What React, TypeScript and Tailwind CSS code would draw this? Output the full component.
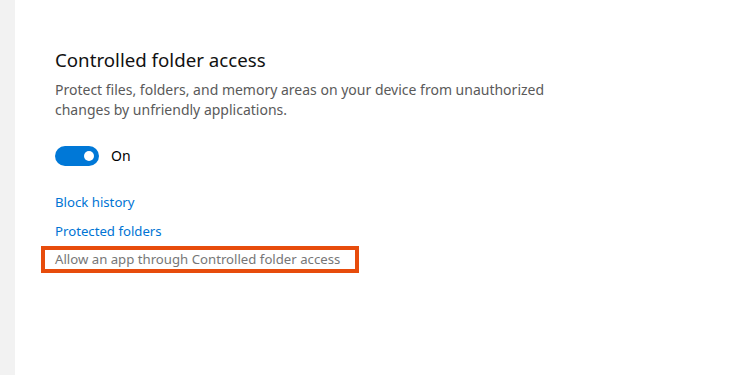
export default function App() {
  return (
    <div
      className="flex h-[375px] w-[750px] bg-white overflow-hidden"
      style={{ fontFamily: '"Noto Sans", "Open Sans", sans-serif' }}
    >
      <div className="w-[15px] shrink-0 bg-[#f2f2f2]" />
      <div className="flex flex-col pl-[40px] pt-[46px]">
        <h1 className="text-[18.7px] leading-[28px] text-[#111]">Controlled folder access</h1>
        <p className="mt-[6px] w-[500px] text-[14px] leading-[20px] text-[#5a5a5a]">
          Protect files, folders, and memory areas on your device from unauthorized changes by
          unfriendly applications.
        </p>

        <div className="mt-[25px] flex items-center gap-[12px]">
          <div className="flex h-[20px] w-[44px] items-center justify-end rounded-full bg-[#0078d7] pr-[5px]">
            <span className="h-[10px] w-[10px] rounded-full bg-white" />
          </div>
          <span className="text-[14px] text-black">On</span>
        </div>

        <div className="mt-[26px] flex flex-col">
          <a className="text-[13.2px] leading-[20px] text-[#0074d4]">Block history</a>
          <a className="mt-[9px] text-[13.2px] leading-[20px] text-[#0074d4]">Protected folders</a>
          <div className="-ml-[14px] mt-[5px] flex h-[27px] w-[318px] items-center border-[4px] border-[#e74c0c] pl-[10px]">
            <span className="whitespace-nowrap text-[13.2px] leading-[19px] text-[#767676]">
              Allow an app through Controlled folder access
            </span>
          </div>
        </div>
      </div>
    </div>
  );
}
